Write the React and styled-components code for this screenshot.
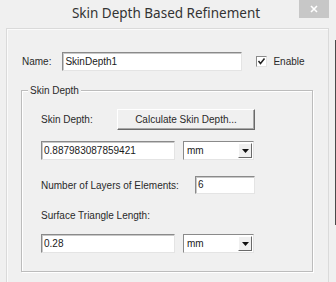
import React from 'react';
import styled, { createGlobalStyle } from 'styled-components';

const GlobalStyle = createGlobalStyle`
  html, body {
    margin: 0;
    padding: 0;
    background: #f0f0f0;
  }
  body {
    font-family: "Liberation Sans", Arial, sans-serif;
  }
`;

const App = () => {
  return (
    <>
      <GlobalStyle />
      <WindowStyle>
        <TitleBarStyle>
          <TitleStyle>Skin Depth Based Refinement</TitleStyle>
          <CloseStyle>
            <svg width="8" height="8" viewBox="0 0 8 8">
              <path d="M1 1 L7 7 M7 1 L1 7" stroke="#fff" strokeWidth="1.6" />
            </svg>
          </CloseStyle>
        </TitleBarStyle>
        <FrameRowStyle>
          <PanelStyle>
            <NameRowStyle>
              <LabelStyle>Name:</LabelStyle>
              <InputStyle width={180} height={19}>SkinDepth1</InputStyle>
              <CheckStyle>
                <BoxStyle>
                  <svg width="9" height="9" viewBox="0 0 9 9">
                    <path d="M1.5 4 L3.5 6.5 L7.5 1.5" stroke="#222" strokeWidth="1.5" fill="none" />
                  </svg>
                </BoxStyle>
                <LabelStyle>Enable</LabelStyle>
              </CheckStyle>
            </NameRowStyle>

            <GroupStyle>
              <LegendStyle>Skin Depth</LegendStyle>
              <RowStyle>
                <LabelStyle>Skin Depth:</LabelStyle>
                <ButtonStyle>Calculate Skin Depth...</ButtonStyle>
              </RowStyle>
              <RowStyle top={11} gap={8}>
                <InputStyle width={134} height={19}>0.887983087859421</InputStyle>
                <Select value="mm" />
              </RowStyle>
              <RowStyle top={16} spread>
                <LabelStyle>Number of Layers of Elements:</LabelStyle>
                <InputStyle width={60} height={18}>6</InputStyle>
              </RowStyle>
              <RowStyle top={15}>
                <LabelStyle>Surface Triangle Length:</LabelStyle>
              </RowStyle>
              <RowStyle top={12} gap={8}>
                <InputStyle width={134} height={19}>0.28</InputStyle>
                <Select value="mm" />
              </RowStyle>
            </GroupStyle>
          </PanelStyle>
          <EdgeStyle />
        </FrameRowStyle>
      </WindowStyle>
    </>
  );
};

const Select = ({ value }) => (
  <SelectStyle>
    <SelectTextStyle>{value}</SelectTextStyle>
    <ArrowButtonStyle>
      <svg width="7" height="4" viewBox="0 0 7 4">
        <path d="M0 0 H7 L3.5 4 Z" fill="#111" />
      </svg>
    </ArrowButtonStyle>
  </SelectStyle>
);

const WindowStyle = styled.div`
  width: 336px;
  height: 282px;
  overflow: hidden;
  display: flex;
  flex-direction: column;
  background: #f0f0f0;
`;

const TitleBarStyle = styled.div`
  height: 28px;
  flex: none;
  display: grid;
  grid-template-columns: 1fr auto 1fr;
  align-items: start;
`;

const TitleStyle = styled.div`
  grid-column: 2;
  margin-top: 4px;
  margin-right: 4px;
  font-family: "Noto Sans", "Open Sans", sans-serif;
  font-size: 13.5px;
  line-height: 19px;
  color: #333;
`;

const CloseStyle = styled.div`
  grid-column: 3;
  justify-self: end;
  margin-right: 7px;
  width: 30px;
  height: 18px;
  background: #c7c7c7;
  display: flex;
  align-items: center;
  justify-content: center;
`;

const FrameRowStyle = styled.div`
  flex: 1;
  display: flex;
  padding-left: 6px;
`;

const PanelStyle = styled.div`
  width: 322px;
  border: 1px solid #dadada;
  border-bottom: none;
  background: #f0f0f0;
  box-shadow: inset 1px 1px 0 #fbfbfb;
`;

const EdgeStyle = styled.div`
  width: 1px;
  margin-left: 6px;
  margin-top: 12px;
  height: 185px;
  background: #4a4a4a;
`;

const NameRowStyle = styled.div`
  display: flex;
  align-items: center;
  margin-top: 23px;
  padding-left: 15px;
  gap: 11px;
`;

const LabelStyle = styled.span`
  font-size: 10px;
  color: #2a2a2a;
  white-space: nowrap;
  line-height: 13px;
`;

const InputStyle = styled.div`
  box-sizing: border-box;
  width: ${({ width }) => width}px;
  height: ${({ height }) => height}px;
  background: #fff;
  border-top: 1px solid #8a8a8a;
  border-left: 1px solid #8a8a8a;
  border-right: 1px solid #e4e4e4;
  border-bottom: 1px solid #e4e4e4;
  box-shadow: inset 1px 1px 0 #c8c8c8;
  padding-left: 2px;
  font-size: 10px;
  line-height: ${({ height }) => height - 2}px;
  color: #1a1a1a;
`;

const CheckStyle = styled.div`
  display: flex;
  align-items: center;
  gap: 6px;
  margin-left: 3px;
`;

const BoxStyle = styled.div`
  box-sizing: border-box;
  width: 11px;
  height: 11px;
  background: #fff;
  border-top: 1px solid #8a8a8a;
  border-left: 1px solid #8a8a8a;
  border-right: 1px solid #e4e4e4;
  border-bottom: 1px solid #e4e4e4;
  display: flex;
  align-items: center;
  justify-content: center;
`;

const GroupStyle = styled.div`
  position: relative;
  margin: 19px 0 0 14px;
  width: 292px;
  height: 182px;
  border: 1px solid #bcbcbc;
  box-shadow: inset 1px 1px 0 #fff, 1px 1px 0 #fff;
  padding: 18px 0 0 19px;
  box-sizing: border-box;
`;

const LegendStyle = styled.span`
  position: absolute;
  top: -7px;
  left: 6px;
  padding: 0 2px;
  background: #f0f0f0;
  font-size: 10px;
  line-height: 13px;
  color: #2a2a2a;
`;

const RowStyle = styled.div`
  display: flex;
  align-items: center;
  margin-top: ${({ top }) => top || 0}px;
  gap: ${({ gap }) => gap || 0}px;
  width: 214px;
  justify-content: ${({ spread }) => (spread ? 'space-between' : 'flex-start')};
  & > span:first-child + button {
    margin-left: auto;
  }
`;

const ButtonStyle = styled.button`
  box-sizing: border-box;
  width: 138px;
  height: 21px;
  padding: 0;
  background: #f0f0f0;
  border-top: 1px solid #fff;
  border-left: 1px solid #fff;
  border-right: 1px solid #6a6a6a;
  border-bottom: 1px solid #6a6a6a;
  box-shadow: inset -1px -1px 0 #a8a8a8;
  font-family: "Liberation Sans", Arial, sans-serif;
  font-size: 10px;
  color: #2a2a2a;
`;

const SelectStyle = styled.div`
  box-sizing: border-box;
  width: 71px;
  height: 19px;
  background: #fff;
  border-top: 1px solid #8a8a8a;
  border-left: 1px solid #8a8a8a;
  border-right: 1px solid #e4e4e4;
  border-bottom: 1px solid #e4e4e4;
  display: flex;
  align-items: stretch;
  padding: 1px;
`;

const SelectTextStyle = styled.span`
  flex: 1;
  padding-left: 2px;
  font-size: 10px;
  line-height: 15px;
  color: #1a1a1a;
`;

const ArrowButtonStyle = styled.div`
  box-sizing: border-box;
  width: 14px;
  background: #f0f0f0;
  border-top: 1px solid #fff;
  border-left: 1px solid #fff;
  border-right: 1px solid #6a6a6a;
  border-bottom: 1px solid #6a6a6a;
  display: flex;
  align-items: center;
  justify-content: center;
`;

export default App;
